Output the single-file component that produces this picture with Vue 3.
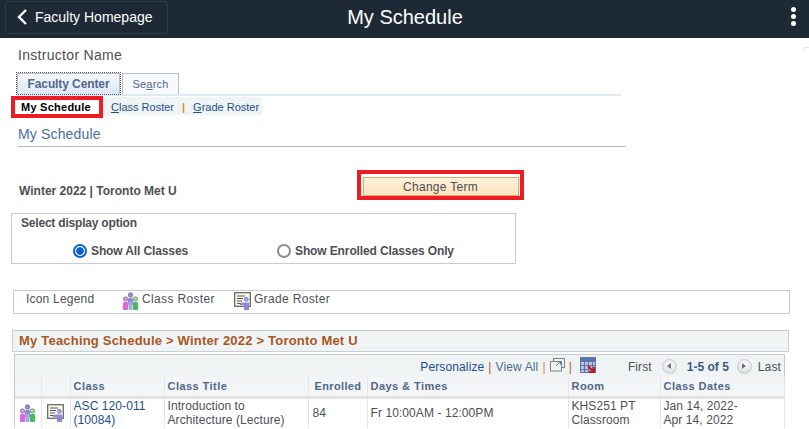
<template>
  <div class="page">
    <header class="topbar">
      <button class="back-btn">
        <svg width="12" height="18" viewBox="0 0 12 18"><path d="M10 2 L3 9 L10 16" fill="none" stroke="#fff" stroke-width="2.4" /></svg>
        <span>Faculty Homepage</span>
      </button>
      <h1>My Schedule</h1>
      <div class="dots"><i></i><i></i><i></i></div>
    </header>

    <main class="content">
      <div class="corner-mark"></div>
      <div class="instructor">Instructor Name</div>

      <div class="tabs">
        <div class="tab active">Faculty Center</div>
        <div class="tab">Se<u>a</u>rch</div>
      </div>

      <nav class="subnav">
        <span class="sub-current">My Schedule</span>
        <div class="sub-links">
          <a><u>C</u>lass Roster</a>
          <span class="sep">|</span>
          <a><u>G</u>rade Roster</a>
        </div>
      </nav>

      <h2 class="page-title">My Schedule</h2>

      <div class="term-row">
        <span class="term">Winter 2022 | Toronto Met U</span>
        <div class="term-btn-wrap"><button class="term-btn">Change Term</button></div>
      </div>

      <fieldset class="display-box">
        <div class="display-title">Select display option</div>
        <div class="radios">
          <label class="radio all"><span class="dot checked"></span>Show All Classes</label>
          <label class="radio"><span class="dot"></span>Show Enrolled Classes Only</label>
        </div>
      </fieldset>

      <div class="legend">
        <span class="legend-label">Icon Legend</span>
        <svg class="ico" width="17" height="18" viewBox="0 0 17 18"><use href="#people" /></svg>
        <span class="legend-text">Class Roster</span>
        <svg class="ico second" width="17" height="18" viewBox="0 0 17 18"><use href="#board" /></svg>
        <span class="legend-text">Grade Roster</span>
      </div>

      <div class="section-title">My Teaching Schedule &gt; Winter 2022 &gt; Toronto Met U</div>

      <div class="grid">
        <div class="grid-tools">
          <a class="plain">Personalize</a>
          <span class="bar">|</span>
          <span class="viewall">View All</span>
          <span class="bar amber">|</span>
          <svg class="ext" width="15" height="14" viewBox="0 0 15 14">
            <rect x="3.5" y="0.5" width="11" height="9" fill="#f0f3f4" stroke="#7d8488" />
            <rect x="0.5" y="3.5" width="11" height="9.5" fill="#f0f3f4" stroke="#7d8488" />
            <path d="M6 8 L10 4 M7.5 3.5 H10.5 V6.5" fill="none" stroke="#6d7478" />
          </svg>
          <span class="bar">|</span>
          <svg class="dl" width="16" height="16" viewBox="0 0 16 16">
            <rect width="16" height="16" fill="#b9c5e2" />
            <rect width="16" height="4" fill="#5f74ad" />
            <path d="M0.5 0V16M4.5 0V16M8.5 0V16M12.5 0V16M15.5 0V16M0 4.5H16M0 8.5H16M0 12.5H16M0 15.5H16" stroke="#5f74ad" />
            <path d="M8 9 L13 14 M14 10 V15 H9" fill="none" stroke="#c4161c" stroke-width="2" />
          </svg>
          <span class="first-label">First</span>
          <span class="round prev"><b class="left"></b></span>
          <span class="count">1-5 of 5</span>
          <span class="round next"><b class="right"></b></span>
          <span class="last">Last</span>
        </div>

        <table>
          <colgroup>
            <col v-for="w in colWidths" :key="w.id" :style="{ width: w.px + 'px' }" />
          </colgroup>
          <thead>
            <tr>
              <th></th>
              <th></th>
              <th>Class</th>
              <th>Class Title</th>
              <th class="enrolled">Enrolled</th>
              <th>Days &amp; Times</th>
              <th>Room</th>
              <th>Class Dates</th>
            </tr>
          </thead>
          <tbody>
            <tr v-for="row in rows" :key="row.id">
              <td class="icon-cell"><svg width="17" height="18" viewBox="0 0 17 18"><use href="#people" /></svg></td>
              <td class="icon-cell"><svg width="17" height="18" viewBox="0 0 17 18"><use href="#board" /></svg></td>
              <td class="link">{{ row.name }}<br />({{ row.id }})</td>
              <td>Introduction to<br />Architecture (Lecture)</td>
              <td class="num">{{ row.enrolled }}</td>
              <td>{{ row.time }}</td>
              <td>KHS251 PT<br />Classroom</td>
              <td>Jan 14, 2022-<br />Apr 14, 2022</td>
            </tr>
          </tbody>
        </table>
      </div>
    </main>

    <svg width="0" height="0" class="defs">
      <symbol id="people" viewBox="0 0 17 18">
        <circle cx="8.5" cy="3" r="2.3" fill="#8f8fd8" stroke="#5a5a9a" stroke-width="0.6" />
        <rect x="5.8" y="6" width="5.4" height="7" rx="1.6" fill="#8a8ad6" />
        <circle cx="3.5" cy="7" r="2.2" fill="#d9a0d9" stroke="#6a5a8a" stroke-width="0.6" />
        <rect x="0.8" y="10" width="5.4" height="8" rx="1.5" fill="#d86ad8" />
        <circle cx="13.5" cy="7" r="2.2" fill="#a0d9a8" stroke="#4a7a5a" stroke-width="0.6" />
        <rect x="10.8" y="10" width="5.4" height="8" rx="1.5" fill="#4cb860" />
        <rect x="6.6" y="10" width="3.8" height="8" fill="#a8a8ea" />
      </symbol>
      <symbol id="board" viewBox="0 0 17 18">
        <rect x="0.7" y="0.7" width="15.6" height="13.6" fill="#fbfbf3" stroke="#6c6c5c" stroke-width="1.3" />
        <path d="M3 4H11M3 6.5H9M3 9H8M3 11.5H7" stroke="#55554a" />
        <circle cx="12.3" cy="7.3" r="2" fill="#a8a8ea" stroke="#5a5a9a" stroke-width="0.6" />
        <path d="M9 10.5H15V18H10V13H6V11.5Z" fill="#8a8ad6" />
      </symbol>
    </svg>
  </div>
</template>

<script setup>
const colWidths = [
  { id: 'a', px: 26 },
  { id: 'b', px: 29 },
  { id: 'c', px: 94 },
  { id: 'd', px: 144 },
  { id: 'e', px: 59 },
  { id: 'f', px: 201 },
  { id: 'g', px: 92 },
  { id: 'h', px: 124 }
]

const rows = [
  { id: '10084', name: 'ASC 120-011', enrolled: 84, time: 'Fr 10:00AM - 12:00PM' }
]
</script>

<style>
html, body {
  margin: 0;
  height: 429px;
  overflow: hidden;
  background: #fff;
}
</style>

<style scoped>
.page {
  position: relative;
  width: 809px;
  height: 429px;
  overflow: hidden;
  font-family: "Liberation Sans", Arial, sans-serif;
  font-size: 12px;
  color: #4d4f53;
}

.defs {
  position: absolute;
}

.corner-mark {
  position: absolute;
  left: 803px;
  top: 47px;
  width: 6px;
  height: 3px;
  border-top: 1px solid #e6e8ea;
  border-left: 1px solid #e6e8ea;
}

.topbar {
  height: 38px;
  background: #1e2936;
  display: flex;
  align-items: center;
  position: relative;
  color: #fff;
}

.back-btn {
  margin: -4px 0 0 5px;
  width: 163px;
  height: 33px;
  box-sizing: border-box;
  background: #1e2936;
  border: 1px solid #2f3c4b;
  border-radius: 4px;
  color: #fff;
  font: 14px "Liberation Sans", Arial, sans-serif;
  display: flex;
  align-items: center;
  gap: 7px;
  padding: 0 0 0 10px;
}

.topbar h1 {
  position: absolute;
  left: 1px;
  right: 0;
  top: 5px;
  margin: 0;
  text-align: center;
  font-size: 20px;
  font-weight: 400;
  line-height: 24px;
}

.dots {
  position: absolute;
  left: 791px;
  top: 7px;
  display: flex;
  flex-direction: column;
  gap: 2px;
}

.dots i {
  width: 5px;
  height: 5px;
  border-radius: 50%;
  background: #fff;
}

.content {
  padding-top: 9px;
}

.instructor {
  margin-left: 18px;
  font-size: 14px;
  line-height: 16px;
  letter-spacing: 0.3px;
}

.tabs {
  margin: 8px 0 0 17px;
  width: 604px;
  height: 23px;
  border-bottom: 2px solid #dfe8f5;
  display: flex;
  align-items: flex-end;
  gap: 2px;
}

.tab {
  height: 21px;
  width: 57px;
  box-sizing: border-box;
  border: 1px solid #b5bfcb;
  border-bottom: none;
  line-height: 20px;
  text-align: center;
  font-size: 11px;
  letter-spacing: 0.2px;
  color: #51688a;
  background: #f8f9fa;
}

.tab.active {
  width: 103px;
  font-size: 12px;
  letter-spacing: -0.1px;
  font-weight: 700;
  background: linear-gradient(#f7f9fc, #dce7f5);
  outline: 1px dotted #555;
}

.subnav {
  display: flex;
  margin-left: 11px;
  height: 22px;
}

.sub-current {
  width: 92px;
  box-sizing: border-box;
  border: 4px solid #ed1c24;
  font-size: 11px;
  font-weight: 700;
  color: #000;
  line-height: 14px;
  padding-left: 6px;
  letter-spacing: 0.25px;
}

.sub-links {
  height: 18px;
  margin-top: 1px;
  padding-top: 1px;
  width: 159px;
  background: #eff4f4;
  box-sizing: border-box;
  padding-left: 8px;
  display: flex;
  align-items: center;
  gap: 8px;
  font-size: 11px;
}

.sub-links a {
  color: #1d4f8a;
}

.sub-links u {
  text-decoration-color: #1d4f8a;
}

.sep {
  color: #d8912c;
  font-weight: 700;
}

.page-title {
  margin: 8px 0 0 18px;
  width: 608px;
  height: 20px;
  border-bottom: 1px solid #b8b8b8;
  font-size: 14px;
  font-weight: 400;
  line-height: 17px;
  letter-spacing: 0.15px;
  color: #4a6f9f;
}

.term-row {
  display: flex;
  align-items: flex-end;
  margin: 23px 0 0 19px;
  height: 31px;
}

.term {
  width: 338px;
  font-weight: 700;
  line-height: 14px;
  padding-bottom: 3px;
}

.term-btn-wrap {
  width: 167px;
  height: 30px;
  box-sizing: border-box;
  border: 4px solid #ed1c24;
  padding: 3px 1px 0 2px;
  margin-bottom: 1px;
}

.term-btn {
  display: block;
  width: 156px;
  height: 19px;
  box-sizing: border-box;
  border: 1px solid #e2a86c;
  background: linear-gradient(#fdf1db, #fbe4c0);
  color: #4d4f53;
  font: 12px/15px "Liberation Sans", Arial, sans-serif;
  letter-spacing: 0.28px;
  padding: 1px 1px 0 0;
}

.display-box {
  margin: 12px 0 0 11px;
  padding: 0;
  width: 505px;
  height: 51px;
  box-sizing: border-box;
  border: 1px solid #c6cbd1;
}

.display-title {
  margin: 2px 0 0 9px;
  font-weight: 700;
  line-height: 14px;
  letter-spacing: -0.2px;
}

.radios {
  display: flex;
  margin: 14px 0 0 61px;
}

.radio {
  display: flex;
  align-items: center;
  gap: 4px;
  font-weight: 700;
  line-height: 14px;
  letter-spacing: -0.12px;
}

.radio.all {
  width: 204px;
}

.dot {
  width: 14px;
  height: 14px;
  box-sizing: border-box;
  border: 2px solid #8c8c96;
  border-radius: 50%;
  background: #fff;
}

.dot.checked {
  border-color: #0b63ce;
  background: radial-gradient(circle, #0b63ce 0 3.5px, #fff 4px);
}

.legend {
  margin: 26px 0 0 13px;
  width: 777px;
  height: 24px;
  box-sizing: border-box;
  border: 1px solid #c6cbd1;
  display: flex;
  align-items: flex-start;
  padding: 1px 0 0 12px;
  line-height: 14px;
  letter-spacing: 0.2px;
}

.legend-label {
  width: 96px;
}

.legend-text {
  margin-left: 3px;
  letter-spacing: 0.35px;
}

.ico.second {
  margin-left: 19px;
}

.section-title {
  margin: 16px 0 0 12px;
  width: 777px;
  height: 22px;
  box-sizing: border-box;
  border: 1px solid #c6cfd3;
  background: #f0f3f4;
  padding-left: 6px;
  color: #a8581f;
  font-size: 13px;
  font-weight: 700;
  letter-spacing: 0.2px;
  line-height: 19px;
}

.grid {
  margin: 2px 0 0 14px;
  width: 771px;
  box-sizing: border-box;
  border: 1px solid #c6cbd1;
  border-bottom: none;
}

.grid-tools {
  height: 22px;
  background: #f0f3f4;
  display: flex;
  align-items: center;
  justify-content: flex-end;
  padding: 2px 3px 0 0;
  box-sizing: border-box;
  letter-spacing: 0.12px;
}

.plain {
  color: #1d4f8a;
}

.bar {
  color: #c0562a;
  margin: 0 4px;
}

.bar.amber {
  color: #d8912c;
  margin: 0 4px;
}

.viewall {
  color: #4d6d92;
}

.ext {
  margin-top: -4px;
}

.dl {
  margin: -4px 0 0 4px;
}

.first-label {
  margin-left: 32px;
}

.round {
  width: 15px;
  height: 15px;
  border-radius: 50%;
  margin: -2px 10px 0;
  background: radial-gradient(circle at 50% 35%, #fff, #d0d3d6);
  border: 1px solid #c8ccd0;
  box-sizing: border-box;
  display: flex;
  align-items: center;
  justify-content: center;
}

.round.next {
  margin: -2px 6px 0 8px;
}

.round b {
  width: 0;
  height: 0;
  border-top: 3px solid transparent;
  border-bottom: 3px solid transparent;
}

.round .left {
  border-right: 4px solid #6b7076;
}

.round .right {
  border-left: 4px solid #6b7076;
}

.count {
  font-weight: 700;
  color: #3e5a80;
  letter-spacing: 0;
}

table {
  border-collapse: collapse;
  table-layout: fixed;
  width: 769px;
}

th {
  height: 20px;
  box-sizing: border-box;
  background: #f4f5f6;
  border-right: 1px solid #e4e6e8;
  border-bottom: 3px solid #e3e3e3;
  text-align: left;
  padding: 0 0 1px 3px;
  font-size: 11px;
  font-weight: 700;
  color: #51688a;
  letter-spacing: 0.45px;
  line-height: 14px;
}

th.enrolled {
  text-align: center;
  padding-left: 1px;
  letter-spacing: 0.35px;
}

td {
  border-right: 1px solid #e4e6e8;
  padding: 0 2px 1px 3px;
  line-height: 14px;
  vertical-align: middle;
  white-space: nowrap;
  letter-spacing: 0.08px;
}

td.link {
  color: #1d4f8a;
}

td.num {
  padding-left: 4px;
}

.icon-cell {
  padding: 0;
  text-align: center;
}

.icon-cell svg {
  display: block;
  margin: 0 auto;
}
</style>
